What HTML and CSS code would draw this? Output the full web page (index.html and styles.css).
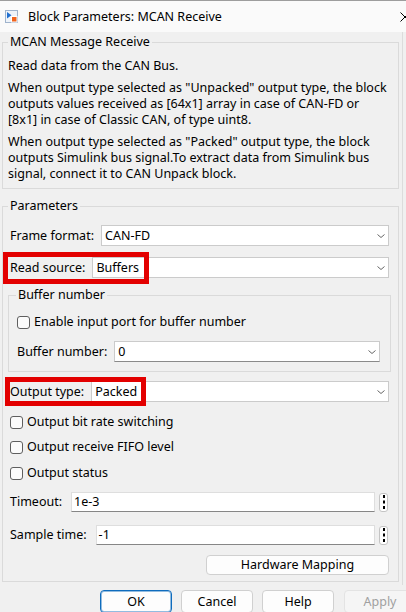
FILE: index.html
```html
<!DOCTYPE html>
<html>
<head>
<meta charset="utf-8">
<title>Block Parameters: MCAN Receive</title>
<link rel="stylesheet" href="styles.css">
</head>
<body>
<div class="window">
  <div class="titlebar">
    <svg class="title-icon" viewBox="0 0 13 13" width="13" height="13">
      <rect x="0.5" y="0.5" width="12" height="12" fill="#eef3f9" stroke="#9fb3cc"/>
      <path d="M2 2 L2 8.5 L6.5 5.2 Z" fill="#1f6fd0"/>
      <rect x="6.5" y="6.5" width="5.5" height="5.5" fill="#f0641e" stroke="#ffffff"/>
    </svg>
    <span class="title-text">Block Parameters: MCAN Receive</span>
    <span class="close">
      <svg viewBox="0 0 10 10" width="10" height="10"><path d="M0.5 0.5 L9.5 9.5 M9.5 0.5 L0.5 9.5" stroke="#000" stroke-width="1" fill="none"/></svg>
    </span>
  </div>

  <div class="content">
    <fieldset class="group desc">
      <legend>MCAN Message Receive</legend>
      <p>Read data from the CAN Bus.</p>
      <p>When output type selected as "Unpacked" output type, the block<br>outputs values received as [64x1] array in case of CAN-FD or<br>[8x1] in case of Classic CAN, of type uint8.</p>
      <p>When output type selected as "Packed" output type, the block<br>outputs Simulink bus signal.To extract data from Simulink bus<br>signal, connect it to CAN Unpack block.</p>
    </fieldset>

    <fieldset class="group params">
      <legend>Parameters</legend>

      <div class="row">
        <span class="label">Frame format:</span>
        <div class="combo"><span>CAN-FD</span><svg class="chev" viewBox="0 0 8 4" width="8" height="4"><path d="M0.5 0.5 L4 3.5 L7.5 0.5" fill="none" stroke="#666" stroke-width="1"/></svg></div>
      </div>

      <div class="row row-read">
        <span class="label">Read source:</span>
        <div class="combo"><span>Buffers</span><svg class="chev" viewBox="0 0 8 4" width="8" height="4"><path d="M0.5 0.5 L4 3.5 L7.5 0.5" fill="none" stroke="#666" stroke-width="1"/></svg></div>
        <div class="mark mark-read"></div>
      </div>

      <fieldset class="group buffer">
        <legend>Buffer number</legend>
        <div class="check">
          <span class="cb"></span><span>Enable input port for buffer number</span>
        </div>
        <div class="row row-bufnum">
          <span class="label">Buffer number:</span>
          <div class="combo combo-edit"><span>0</span><svg class="chev" viewBox="0 0 8 4" width="8" height="4"><path d="M0.5 0.5 L4 3.5 L7.5 0.5" fill="none" stroke="#666" stroke-width="1"/></svg></div>
        </div>
      </fieldset>

      <div class="row row-out">
        <span class="label">Output type:</span>
        <div class="combo"><span>Packed</span><svg class="chev" viewBox="0 0 8 4" width="8" height="4"><path d="M0.5 0.5 L4 3.5 L7.5 0.5" fill="none" stroke="#666" stroke-width="1"/></svg></div>
        <div class="mark mark-out"></div>
      </div>

      <div class="check check-1"><span class="cb"></span><span>Output bit rate switching</span></div>
      <div class="check check-2"><span class="cb"></span><span>Output receive FIFO level</span></div>
      <div class="check check-3"><span class="cb"></span><span>Output status</span></div>

      <div class="row edit-row row-timeout">
        <span class="label">Timeout:</span>
        <div class="edit">1e-3</div>
        <div class="dots"><svg viewBox="0 0 2 14" width="2" height="14"><rect x="0" y="0" width="2" height="3" fill="#000"/><rect x="0" y="5.5" width="2" height="3" fill="#000"/><rect x="0" y="11" width="2" height="3" fill="#000"/></svg></div>
      </div>

      <div class="row edit-row row-sample">
        <span class="label">Sample time:</span>
        <div class="edit">-1</div>
        <div class="dots"><svg viewBox="0 0 2 14" width="2" height="14"><rect x="0" y="0" width="2" height="3" fill="#000"/><rect x="0" y="5.5" width="2" height="3" fill="#000"/><rect x="0" y="11" width="2" height="3" fill="#000"/></svg></div>
      </div>

      <div class="hw-row">
        <button class="btn hw">Hardware Mapping</button>
      </div>
    </fieldset>
  </div>

  <div class="buttons">
    <button class="btn btn-ok">OK</button>
    <button class="btn">Cancel</button>
    <button class="btn">Help</button>
    <button class="btn btn-disabled">Apply</button>
  </div>
</div>
</body>
</html>
```

FILE: styles.css
```css
* { box-sizing: border-box; }

html, body {
  margin: 0;
  padding: 0;
  width: 406px;
  height: 612px;
  overflow: hidden;
  background: #f0f0f0;
}

body {
  font-family: "Noto Sans", "Open Sans", sans-serif;
  font-size: 12.5px;
  line-height: 16px;
  color: #000;
}

/* the dialog is wider than the captured frame; its right part is clipped */
.window {
  width: 406px;
  height: 612px;
  overflow: hidden;
}

.titlebar {
  width: 428px;
  height: 32px;
  border-top: 1px solid #9d9d9d;
  background: #fafafa;
  display: flex;
  align-items: center;
  padding-left: 5px;
}

.title-icon { flex: none; margin-right: 10px; }
.title-text { flex: 1; }

.close {
  width: 46px;
  height: 31px;
  display: flex;
  align-items: center;
  justify-content: center;
}

.content {
  width: 403px;
  height: 553px;
  padding: 2px 3px 0 2px;
  border-right: 1px solid #dcdcdc;
}

.group {
  margin: 0;
  border: 1px solid #dadada;
  min-width: 0;
}

.group > legend { padding: 0 2px; }

.desc { padding: 8px 5px 6px 5px; }
.desc p { margin: 0; white-space: nowrap; }
.desc p + p { margin-top: 6px; }

.params {
  margin-top: 9px;
  padding: 11px 9px 6px 7px;
}
.params > legend { margin-left: -2px; }

.row {
  position: relative;
  display: flex;
  align-items: center;
  height: 21px;
  gap: 7px;
}

.label { white-space: nowrap; }

.row-read { margin-top: 11px; }

.combo {
  flex: 1;
  height: 21px;
  background: #fff;
  border: 1px solid #cbcbcb;
  display: flex;
  align-items: center;
  justify-content: space-between;
  padding: 0 3px;
}

.combo-edit { border-bottom-color: #8a8a8a; }

.chev { flex: none; }

.mark {
  position: absolute;
  border: 5px solid #e30000;
  pointer-events: none;
}
.mark-read { left: -7px; top: -5px; width: 146px; height: 32px; }
.mark-out { left: -5px; top: -4px; width: 141px; height: 29px; }

.buffer {
  margin: 9px -2px 0;
  padding: 11px 10px 9px 8px;
}
.buffer > legend { margin-left: -1px; }

.row-bufnum { margin-top: 11px; }

.check {
  display: flex;
  align-items: center;
  gap: 4px;
  height: 16px;
  white-space: nowrap;
}

.cb {
  flex: none;
  width: 13px;
  height: 13px;
  border: 1px solid #5f5f5f;
  border-radius: 3px;
  background: #fbfbfb;
}

.row-out { margin-top: 9px; }
.check-1 { margin-top: 12px; }
.check-2 { margin-top: 9px; }
.check-3 { margin-top: 10px; }

.edit-row { height: 20px; gap: 9px; }
.row-timeout { margin-top: 11px; }
.row-sample { margin-top: 13px; }

.edit {
  flex: 1;
  height: 20px;
  background: #fff;
  border: 1px solid #dedede;
  border-bottom-color: #868686;
  padding-left: 2px;
  line-height: 18px;
}

.dots {
  flex: none;
  width: 9px;
  height: 19px;
  margin-left: -5px;
  margin-right: 1px;
  background: #fff;
  border: 1px solid #c4c4c4;
  border-radius: 3px;
  display: flex;
  align-items: center;
  justify-content: center;
}

.hw-row {
  display: flex;
  justify-content: flex-end;
  margin-top: 10px;
}

.btn {
  font: inherit;
  color: #000;
  background: #fdfdfd;
  border: 1px solid #d0d0d0;
  border-radius: 4px;
  padding: 0;
  width: 72px;
  height: 23px;
  text-align: center;
  flex: none;
}

.hw { width: 183px; height: 20px; }

.buttons {
  width: 428px;
  display: flex;
  gap: 9px;
  padding-left: 100px;
  margin-top: 5px;
}

.btn-ok {
  border-color: #0f6cbd;
  box-shadow: inset 0 0 0 1px rgba(15, 108, 189, 0.45);
}

.btn-disabled {
  color: #a0a0a0;
  background: #f5f5f5;
  border-color: #e3e3e3;
  margin-left: 1px;
}
```
